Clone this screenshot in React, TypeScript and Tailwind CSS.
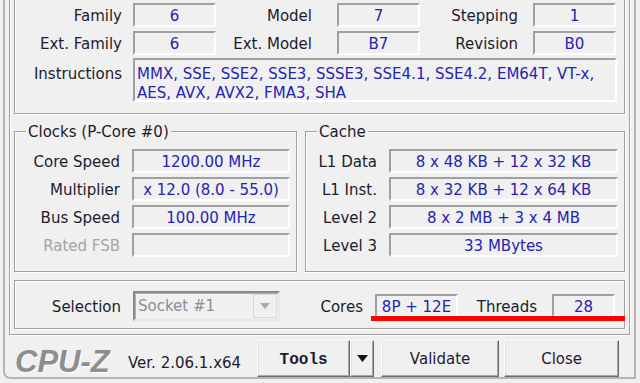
import clsx from 'clsx';

const label = 'text-[#1c1c2c] whitespace-nowrap pt-[3px]';

function Field({
  children,
  className,
  left,
}: {
  children?: React.ReactNode;
  className?: string;
  left?: boolean;
}) {
  return (
    <div
      className={clsx(
        'h-[24px] pt-[3px] flex items-center border-2 border-t-[#a0a0a0] border-l-[#a0a0a0] border-b-white border-r-white text-[#2424b0] whitespace-nowrap leading-none',
        left ? 'justify-start pl-[4px]' : 'justify-center',
        className
      )}
    >
      {children}
    </div>
  );
}

function Row({ name, value, lw, bw, muted }: { name: string; value?: string; lw: string; bw: string; muted?: boolean }) {
  return (
    <div className="flex items-center h-[24px]">
      <span className={clsx('text-right', lw, muted ? 'text-[#a4a4a4] whitespace-nowrap pt-[3px]' : label)}>{name}</span>
      <Field className={clsx('ml-[12px]', bw)}>{value}</Field>
    </div>
  );
}

const etched = 'border border-[#a0a0a0] shadow-[inset_1px_1px_0_#fff,1px_1px_0_#fff]';

function Group({ title, className, children }: { title: string; className?: string; children: React.ReactNode }) {
  return (
    <fieldset className={clsx(etched, className)}>
      <legend className="ml-[11px] px-[2px] leading-[18px] pt-[1px] text-[#1c1c2c] bg-[#f0f0f0]">{title}</legend>
      {children}
    </fieldset>
  );
}

function Button({ children, className }: { children: React.ReactNode; className?: string }) {
  return (
    <div
      className={clsx(
        'h-[37px] flex items-center justify-center border border-t-[#fdfdfd] border-l-[#fdfdfd] border-b-[#6a6a6a] border-r-[#6a6a6a] shadow-[inset_-1px_-1px_0_#a8a8a8,inset_1px_1px_0_#e4e4e4] bg-[#f0f0f0] text-[#1c1c2c]',
        className
      )}
    >
      {children}
    </div>
  );
}

export default function App() {
  return (
    <div className="relative w-[640px] h-[383px] bg-[#f0f0f0] overflow-hidden pl-[3px] pr-[4px] pb-[4px] font-['DejaVu_Sans',Verdana,sans-serif] text-[15px]">
      <div className="h-full flex flex-col px-[4px] border-l-2 border-r-2 border-b-2 border-[#b4b4b4] rounded-bl-[7px]">
        {/* tab page */}
        <div className="px-[4px] pb-[5px] border-l border-r border-b border-[#a0a0a0] shadow-[inset_1px_0_0_#fff,1px_1px_0_#fff]">
          {/* Processor group, top cut off */}
          <div className="pt-[3px] pb-[11px] border-l border-r border-b border-[#a0a0a0] shadow-[inset_1px_0_0_#fff,1px_1px_0_#fff]">
            <div className="flex items-center h-[24px]">
              <span className={clsx('w-[107px] text-right', label)}>Family</span>
              <Field className="ml-[11px] w-[83px]">6</Field>
              <span className={clsx('w-[96px] text-right', label)}>Model</span>
              <Field className="ml-[25px] w-[83px]">7</Field>
              <span className={clsx('w-[98px] text-right', label)}>Stepping</span>
              <Field className="ml-[15px] w-[83px]">1</Field>
            </div>
            <div className="flex items-center h-[24px] mt-[4px]">
              <span className={clsx('w-[107px] text-right', label)}>Ext. Family</span>
              <Field className="ml-[11px] w-[83px]">6</Field>
              <span className={clsx('w-[96px] text-right', label)}>Ext. Model</span>
              <Field className="ml-[25px] w-[83px]">B7</Field>
              <span className={clsx('w-[98px] text-right', label)}>Revision</span>
              <Field className="ml-[15px] w-[83px]">B0</Field>
            </div>
            <div className="flex items-start mt-[3px]">
              <span className={clsx('w-[107px] text-right leading-[19px] !pt-[7px]', label)}>Instructions</span>
              <div className="ml-[11px] w-[484px] h-[44px] pl-[2px] pt-[5px] leading-[19px] border-2 border-t-[#a0a0a0] border-l-[#a0a0a0] border-b-white border-r-white text-[#2424b0] whitespace-nowrap">
                MMX, SSE, SSE2, SSE3, SSSE3, SSE4.1, SSE4.2, EM64T, VT-x,
                <br />
                AES, AVX, AVX2, FMA3, SHA
              </div>
            </div>
          </div>

          {/* Clocks + Cache */}
          <div className="flex gap-[8px] mt-[8px]">
            <Group title="Clocks (P-Core #0)" className="w-[283px] pt-[8px] pb-[14px]">
              <div className="flex flex-col gap-[4px]">
                <Row name="Core Speed" value="1200.00 MHz" lw="w-[105px]" bw="w-[158px]" />
                <Row name="Multiplier" value="x 12.0 (8.0 - 55.0)" lw="w-[105px]" bw="w-[158px]" />
                <Row name="Bus Speed" value="100.00 MHz" lw="w-[105px]" bw="w-[158px]" />
                <Row name="Rated FSB" lw="w-[105px]" bw="w-[158px]" muted />
              </div>
            </Group>
            <Group title="Cache" className="w-[320px] pt-[8px] pb-[14px]">
              <div className="flex flex-col gap-[4px]">
                <Row name="L1 Data" value="8 x 48 KB + 12 x 32 KB" lw="w-[71px]" bw="w-[229px]" />
                <Row name="L1 Inst." value="8 x 32 KB + 12 x 64 KB" lw="w-[71px]" bw="w-[229px]" />
                <Row name="Level 2" value="8 x 2 MB + 3 x 4 MB" lw="w-[71px]" bw="w-[229px]" />
                <Row name="Level 3" value="33 MBytes" lw="w-[71px]" bw="w-[229px]" />
              </div>
            </Group>
          </div>

          {/* Selection row */}
          <div className={clsx('mt-[8px] h-[49px] flex items-center pt-[2px]', etched)}>
            <span className={clsx('w-[106px] text-right', label)}>Selection</span>
            <div className="ml-[12px] w-[147px] h-[30px] flex items-stretch border-2 border-t-[#8a8a8a] border-l-[#8a8a8a] border-b-[#e8e8e8] border-r-[#e8e8e8] shadow-[inset_1px_1px_0_#b0b0b0]">
              <span className="flex-1 flex items-center pl-[3px] pt-[2px] text-[#8c8c9c]">Socket #1</span>
              <span className="w-[24px] my-[1px] mr-[1px] flex items-center justify-center border border-[#d8d8d8]">
                <svg width="10" height="6" viewBox="0 0 10 6">
                  <path d="M0 0h10L5 6z" fill="#a8a8a8" />
                </svg>
              </span>
            </div>
            <span className={clsx('w-[83px] text-right', label)}>Cores</span>
            <Field className="ml-[12px] w-[83px] !h-[23px]">8P + 12E</Field>
            <span className={clsx('w-[79px] text-right', label)}>Threads</span>
            <Field className="ml-[15px] w-[63px] !h-[23px]">28</Field>
          </div>
        </div>

        {/* footer */}
        <div className="flex-1 flex items-end">
          <span className="self-center mt-[10px] ml-[6px] w-[109px] text-[31px] leading-none font-['Liberation_Sans',Arial,sans-serif] font-bold italic text-[#8e8e8e] [text-shadow:1px_1px_0_#fff]">
            CPU-Z
          </span>
          <span className="self-center mt-[14px] ml-[4px] text-[#1c1c2c] whitespace-nowrap">Ver. 2.06.1.x64</span>
          <div className="ml-[16px] flex">
            <Button className="w-[93px] pt-[2px] font-['Liberation_Mono',monospace] font-bold text-[16px]">Tools</Button>
            <Button className="w-[24px]">
              <svg width="11" height="7" viewBox="0 0 11 7">
                <path d="M0 0h11L5.5 7z" fill="#111" />
              </svg>
            </Button>
          </div>
          <Button className="ml-[7px] w-[118px] pt-[2px]">Validate</Button>
          <Button className="ml-[5px] w-[115px] pt-[2px]">Close</Button>
        </div>
      </div>

      {/* red annotation underline */}
      <div className="absolute left-[371px] top-[316px] w-[254px] h-[5px] bg-[#ff0000]" />
    </div>
  );
}
